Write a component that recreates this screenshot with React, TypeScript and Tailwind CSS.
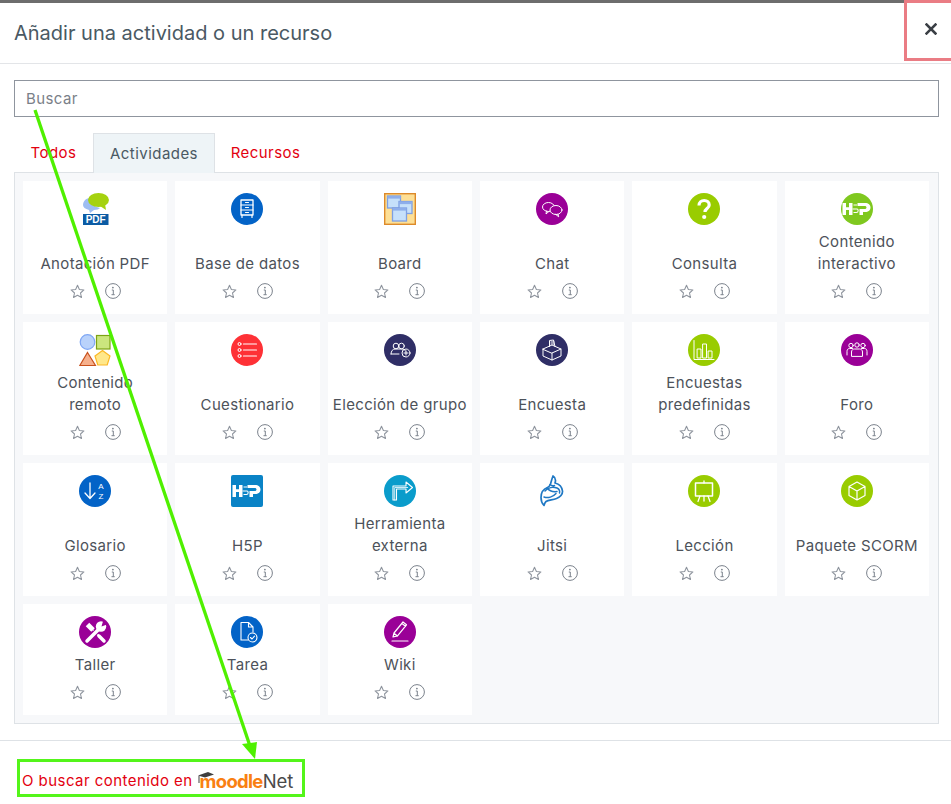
import React from "react";

const Circle = ({ fill, children }: { fill: string; children?: React.ReactNode }) => (
  <svg width="32" height="32" viewBox="0 0 32 32" className="block">
    <circle cx="16" cy="16" r="16" fill={fill} />
    <g fill="none" stroke="#fff" strokeWidth="1" strokeLinecap="round" strokeLinejoin="round">{children}</g>
  </svg>
);

const Plain = ({ children }: { children: React.ReactNode }) => (
  <svg width="32" height="32" viewBox="0 0 32 32" className="block">{children}</svg>
);

const Pdf = () => (
  <Plain>
    <path d="M10 5c-4 1-6 4-6 7 0 2 2 4 6 5l1 3 4-3c3 0 5-1 6-2-5-1-9-4-11-10z" fill="#9dbdf2" />
    <ellipse cx="19.500" cy="7" rx="10.500" ry="7" fill="#a5d20f" />
    <path d="M21 13l6 4-1-6z" fill="#a5d20f" />
    <rect x="4" y="21" width="25.500" height="11" fill="#0b5ba4" />
    <text x="16.700" y="30.300" fontSize="10" fontWeight="700" fill="#fff" textAnchor="middle" fontFamily="Liberation Sans, sans-serif">PDF</text>
  </Plain>
);

const Database = () => (
  <Circle fill="#0363c7">
    <rect x="10" y="7" width="12" height="15" strokeWidth="1.300" />
    <path d="M10 12h12M10 17h12M14.500 9.500h3M14.500 14.500h3M14.500 19.500h3M11 22v2.500M21 22v2.500" strokeWidth="1.200" />
  </Circle>
);

const Win = ({ x, y, w, h }: { x: number; y: number; w: number; h: number }) => (
  <g>
    <rect x={x} y={y} width={w} height={h} fill="#c6e0fa" stroke="#7d9fe2" strokeWidth="1.300" />
    <rect x={x} y={y} width={w} height="2.600" fill="#8eaeea" />
  </g>
);

const Board = () => (
  <Plain>
    <rect x="0.700" y="0.700" width="30.600" height="30.600" fill="#fddf95" stroke="#dd8a2a" strokeWidth="1.400" />
    <Win x={3.500} y={3} w={13} h={12} />
    <Win x={15} y={8.500} w={13} h={12} />
    <Win x={8.500} y={15} w={14} h={13} />
  </Plain>
);

const ChatI = () => (
  <Circle fill="#9a0097">
    <ellipse cx="12.500" cy="14" rx="6" ry="4.500" />
    <path d="M10.500 18l-.5 3 3-2.600" />
    <ellipse cx="20" cy="17" rx="6" ry="4.500" fill="#9a0097" />
    <path d="M22 21.200l.7 2.600-3-2.400" />
  </Circle>
);

const Question = () => (
  <Plain>
    <circle cx="16" cy="16" r="16" fill="#99cc00" />
    <path d="M11 12.500c0-3 2.200-5 5.200-5s5 1.800 5 4.400c0 3.600-4.200 3.600-4.200 7" fill="none" stroke="#fff" strokeWidth="3.200" />
    <circle cx="16.200" cy="24" r="2.100" fill="#fff" />
  </Plain>
);

const H5pMark = () => (
  <g>
    <path d="M1.500 10h3.500v4.200h3V10h3.500v12H8v-5H5v5H1.500z" fill="#fff" />
    <path d="M12.500 12h3.500M11.500 16h4.500c1.500 0 1.700 3.500-.5 3.500h-3" fill="none" stroke="#fff" strokeWidth="1.100" />
    <path d="M16.500 10h7.500c3.500 0 5.500 2 5.500 4.500 0 3-2.500 4.500-5 4.500h-2.500v3H18.500v-6h5c1.500 0 2-.8 2-1.600s-.5-1.500-2-1.500h-7z" fill="#fff" />
  </g>
);

const H5pGreen = () => (
  <Plain>
    <circle cx="16" cy="16" r="16" fill="#7fc81f" />
    <H5pMark />
  </Plain>
);

const H5pBlue = () => (
  <Plain>
    <rect width="32" height="32" rx="2" fill="#0a83c6" />
    <H5pMark />
  </Plain>
);

const Remote = () => (
  <Plain>
    <circle cx="8.500" cy="8" r="7.300" fill="#b9d2fb" stroke="#7ea6f4" strokeWidth="1.200" />
    <rect x="17.500" y="1.500" width="13.500" height="13.500" fill="#cbe67e" stroke="#7da314" strokeWidth="1.200" />
    <path d="M8.500 18.500l8 13H.8z" fill="#f6b08c" stroke="#c8501c" strokeWidth="1.200" />
    <path d="M23.500 16.500l7.500 5.500-2.800 9h-9.400l-2.800-9z" fill="#ffe78a" stroke="#fbb826" strokeWidth="1.200" />
  </Plain>
);

const Quiz = () => (
  <Circle fill="#fe3136">
    <circle cx="8.500" cy="10" r="1.500" />
    <circle cx="8.500" cy="16" r="1.500" />
    <circle cx="8.500" cy="22" r="1.500" />
    <path d="M12.500 10h13M12.500 16h13M12.500 22h13" strokeWidth="1.100" />
  </Circle>
);

const Group = () => (
  <Circle fill="#2f2e66">
    <circle cx="12" cy="12" r="2.800" />
    <circle cx="17.500" cy="12" r="2.800" />
    <path d="M7 20c0-3 1.800-5 4-5h7c2 0 3 1 3.500 2M7 20h8" />
    <circle cx="22" cy="19" r="4" />
    <path d="M22 17v4M20 19h4" />
  </Circle>
);

const Survey = () => (
  <Circle fill="#2f2e66">
    <path d="M7 15l9-4 9 4-9 4zM7 15v7l9 4 9-4v-7M16 19v7" />
    <path d="M13.500 12.500V6.500l4-.5 1.500 6.500M15 8h3M15 10h3" />
  </Circle>
);

const Feedback = () => (
  <Circle fill="#99cc00">
    <path d="M6 6.500v19h20" />
    <rect x="9.500" y="15" width="3.500" height="9" />
    <rect x="15" y="10" width="3.500" height="14" />
    <rect x="20.500" y="17" width="3.500" height="7" />
  </Circle>
);

const Forum = () => (
  <Circle fill="#9a0097">
    <circle cx="10" cy="11.500" r="2.200" />
    <circle cx="16" cy="11" r="2.200" />
    <circle cx="22" cy="11.500" r="2.200" />
    <path d="M6 21v-3.500c0-2 1-3 2.500-3h3M26 21v-3.500c0-2-1-3-2.500-3h-3" />
    <path d="M10.500 22v-4c0-2 1.500-3 3-3h5c1.500 0 3 1 3 3v4z" />
  </Circle>
);

const Glossary = () => (
  <Circle fill="#0363c7">
    <path d="M11 8v15M6 18l5 5.500 5-5.500" strokeWidth="1.300" />
    <text x="22" y="14" fontSize="8" fill="#fff" stroke="none" textAnchor="middle" fontFamily="Liberation Sans, sans-serif">A</text>
    <text x="22" y="24" fontSize="8" fill="#fff" stroke="none" textAnchor="middle" fontFamily="Liberation Sans, sans-serif">Z</text>
  </Circle>
);

const External = () => (
  <Circle fill="#0a9ccb">
    <path d="M9 25V11h13V7l6.500 5.500L22 18v-4h-9.500v11z" strokeWidth="1.100" />
    <path d="M10.700 25V12.500h13" strokeWidth=".8" />
  </Circle>
);

const Jitsi = () => (
  <Plain>
    <g fill="none" stroke="#1f78c4" strokeWidth="1.700" strokeLinecap="round" strokeLinejoin="round">
      <path d="M17 1c2.500 1.500 3 4 2 7 4 1 7 4 7.500 8 .3 3.500-2.500 6-6 7.500-4 1.500-8 1.500-10.500 3-1.200 1-1.500 2.500-2 4-2-2-3-5-3-8 0-4.500 2.500-8.500 6.500-10 1.500-.6 2-1 3-3.500.7-2.500 1.500-5.500 2.500-8z" />
      <path d="M9 16c3-3.500 8-4.500 12-3 2 1 3 3 2.500 5M8 22c4 1.500 9 0 12-3.500M11 13c2 2.500 6 4 10 3.500M14 9.500c1 1 2.500 1.500 4.500 1" strokeWidth="1.500" />
    </g>
  </Plain>
);

const Lesson = () => (
  <Circle fill="#99cc00">
    <rect x="7.500" y="8" width="17" height="13" strokeWidth="1.500" />
    <path d="M16 6v2M12 21l-2 5.500M20 21l2 5.500M16 21v5" strokeWidth="1.300" />
  </Circle>
);

const Scorm = () => (
  <Circle fill="#99cc00">
    <path d="M16 7l8 4.500v9L16 25l-8-4.500v-9zM8 11.500l8 4.500 8-4.500M16 16v9" strokeWidth="1.200" />
  </Circle>
);

const Workshop = () => (
  <Plain>
    <circle cx="16" cy="16" r="16" fill="#9a0097" />
    <path d="M8.500 8.500L14 14" stroke="#fff" strokeWidth="5" />
    <path d="M14 14l6 6" stroke="#fff" strokeWidth="1.800" />
    <path d="M20 20l5 5" stroke="#fff" strokeWidth="3.500" strokeLinecap="round" />
    <path d="M8.500 24.500L20 13" stroke="#9a0097" strokeWidth="5.500" />
    <path d="M8 25L20 13" stroke="#fff" strokeWidth="3.500" strokeLinecap="round" />
    <circle cx="22" cy="10.500" r="5.200" fill="#fff" />
    <path d="M22.500 10.500L24.500 3.500 29.500 8z" fill="#9a0097" />
  </Plain>
);

const Assign = () => (
  <Circle fill="#0363c7">
    <path d="M10 6.500h7.500l4.500 4.500v5M17.500 6.500V11H22M10 6.500v17.500h7" strokeWidth="1.100" />
    <circle cx="21.500" cy="21.500" r="4.500" strokeWidth="1.100" />
    <path d="M19.500 21.500l1.500 1.500 2.500-2.800" strokeWidth="1.100" />
  </Circle>
);

const WikiI = () => (
  <Circle fill="#9a0097">
    <path d="M9 21l1-4 9-11 3.500 2.800-9 11zM18 7.500l3.500 2.800M10 17.200l3.500 2.800M8 25h16" strokeWidth="1.200" />
  </Circle>
);

const Star = () => (
  <svg width="15" height="15" viewBox="0 0 24 24" className="block mt-[1px]" fill="none" stroke="#8f959e" strokeWidth="1.700" strokeLinejoin="round">
    <path d="M12 2l3 6.800 7.300.7-5.500 4.900 1.600 7.300L12 17.900l-6.400 3.800 1.600-7.300L1.700 9.500 9 8.800z" />
  </svg>
);

const Info = () => (
  <svg width="16" height="16" viewBox="0 0 16 16" className="block -mt-[1px]" fill="none" stroke="#7b828c">
    <circle cx="8" cy="8" r="7.400" strokeWidth="1" />
    <path d="M6.800 7h1.500v4.600M6.500 11.700h3.200" strokeWidth="1" />
    <circle cx="7.900" cy="4.600" r=".9" fill="#7b828c" stroke="none" />
  </svg>
);

const items: { name: React.ReactNode; icon: React.ReactNode }[] = [
  { name: "Anotación PDF", icon: <Pdf /> },
  { name: "Base de datos", icon: <Database /> },
  { name: "Board", icon: <Board /> },
  { name: "Chat", icon: <ChatI /> },
  { name: "Consulta", icon: <Question /> },
  { name: <>Contenido<br />interactivo</>, icon: <H5pGreen /> },
  { name: <>Contenido<br />remoto</>, icon: <Remote /> },
  { name: "Cuestionario", icon: <Quiz /> },
  { name: "Elección de grupo", icon: <Group /> },
  { name: "Encuesta", icon: <Survey /> },
  { name: <>Encuestas<br />predefinidas</>, icon: <Feedback /> },
  { name: "Foro", icon: <Forum /> },
  { name: "Glosario", icon: <Glossary /> },
  { name: "H5P", icon: <H5pBlue /> },
  { name: <>Herramienta<br />externa</>, icon: <External /> },
  { name: "Jitsi", icon: <Jitsi /> },
  { name: "Lección", icon: <Lesson /> },
  { name: "Paquete SCORM", icon: <Scorm /> },
  { name: "Taller", icon: <Workshop /> },
  { name: "Tarea", icon: <Assign /> },
  { name: "Wiki", icon: <WikiI /> },
];

const Card = ({ name, icon }: { name: React.ReactNode; icon: React.ReactNode }) => (
  <div className="flex flex-col items-center bg-white pt-3 pb-[11px]">
    <div className="h-8 w-8 shrink-0">{icon}</div>
    <div className="mt-auto pt-[6px] text-center text-[15px] leading-[22px] tracking-[0.33px] text-[#4d525a] whitespace-nowrap">{name}</div>
    <div className="mt-[4px] flex h-6 items-center justify-center gap-[20px]">
      <Star />
      <Info />
    </div>
  </div>
);

export default function App() {
  return (
    <div className="relative h-[804px] w-full overflow-hidden bg-white font-['Inter','Liberation_Sans',sans-serif]">
      <div className="h-[3px] bg-[#6d6d6d]" />
      <header className="flex h-[61px] items-center justify-between border-b border-[#e3e5e8] px-[14px]">
        <h1 className="text-[20px] font-normal text-[#4a5963]">Añadir una actividad o un recurso</h1>
        <svg width="12" height="12" viewBox="0 0 12 12" className="-mt-[9px]" stroke="#3a3f45" strokeWidth="2.500" strokeLinecap="square">
          <path d="M1.500 1.500l9 9M10.500 1.500l-9 9" />
        </svg>
      </header>

      <main className="px-[14px] pt-4">
        <input
          placeholder="Buscar"
          className="block h-[37px] w-[925px] border border-[#8f959e] bg-white px-[11px] text-[15px] tracking-[0.4px] text-[#495057] outline-none placeholder:text-[#7a8088]"
        />
        <nav className="mt-4 flex h-[39px] items-stretch text-[15px] tracking-[0.45px]">
          <div className="flex w-[79px] items-center justify-center pt-[2px] text-[#e3000f]">Todos</div>
          <div className="z-10 -mb-[1px] flex w-[122px] items-center justify-center border border-b-0 border-[#dee2e6] bg-[#eef4f7] pt-[1px] text-[#4a5963]">Actividades</div>
          <div className="flex w-[101px] items-center justify-center pt-[2px] text-[#e3000f]">Recursos</div>
        </nav>
        <section className="grid h-[552px] w-[925px] grid-cols-6 grid-rows-[133px_133px_133px_111px] gap-2 border border-[#dee2e6] bg-[#f7f8fa] py-2 pl-2 pr-[9px]">
          {items.map((it, i) => (
            <Card key={i} name={it.name} icon={it.icon} />
          ))}
        </section>
      </main>

      <footer className="mt-4 flex h-[64px] items-start border-t border-[#dee2e6] pl-[22px] pt-[28px]">
        <span className="text-[15px] leading-[24px] tracking-[0.45px] text-[#e3000f]">O buscar contenido en</span>
        <span className="relative ml-[5px] flex items-baseline">
          <svg width="16" height="12" viewBox="0 0 16 12" className="absolute left-0 top-[3px]">
            <path d="M0 3.500L10 0l6 2.500-9 3z" fill="#3f3f3f" />
            <path d="M1 4v7" stroke="#3f3f3f" strokeWidth="1" />
          </svg>
          <span className="pl-[2px] text-[18.500px] font-bold leading-[24px] tracking-[-0.700px] text-[#f98012]">moodle</span>
          <span className="text-[18.500px] leading-[24px] text-[#4a4a4a]">Net</span>
        </span>
      </footer>

      <div className="pointer-events-none absolute right-[-3px] top-0 h-[61px] w-[50px] border-[3px] border-[#ea7c84]" />
      <div className="pointer-events-none absolute left-[17px] top-[759px] h-[38px] w-[288px] border-[3px] border-[#54f51a]" />
      <svg className="pointer-events-none absolute left-0 top-0" width="951" height="804" viewBox="0 0 951 804">
        <path d="M35 110L250 746" stroke="#4ff000" strokeWidth="3.300" fill="none" />
        <path d="M255 759l-13-15 15-2z" fill="#4ff000" />
      </svg>
    </div>
  );
}
